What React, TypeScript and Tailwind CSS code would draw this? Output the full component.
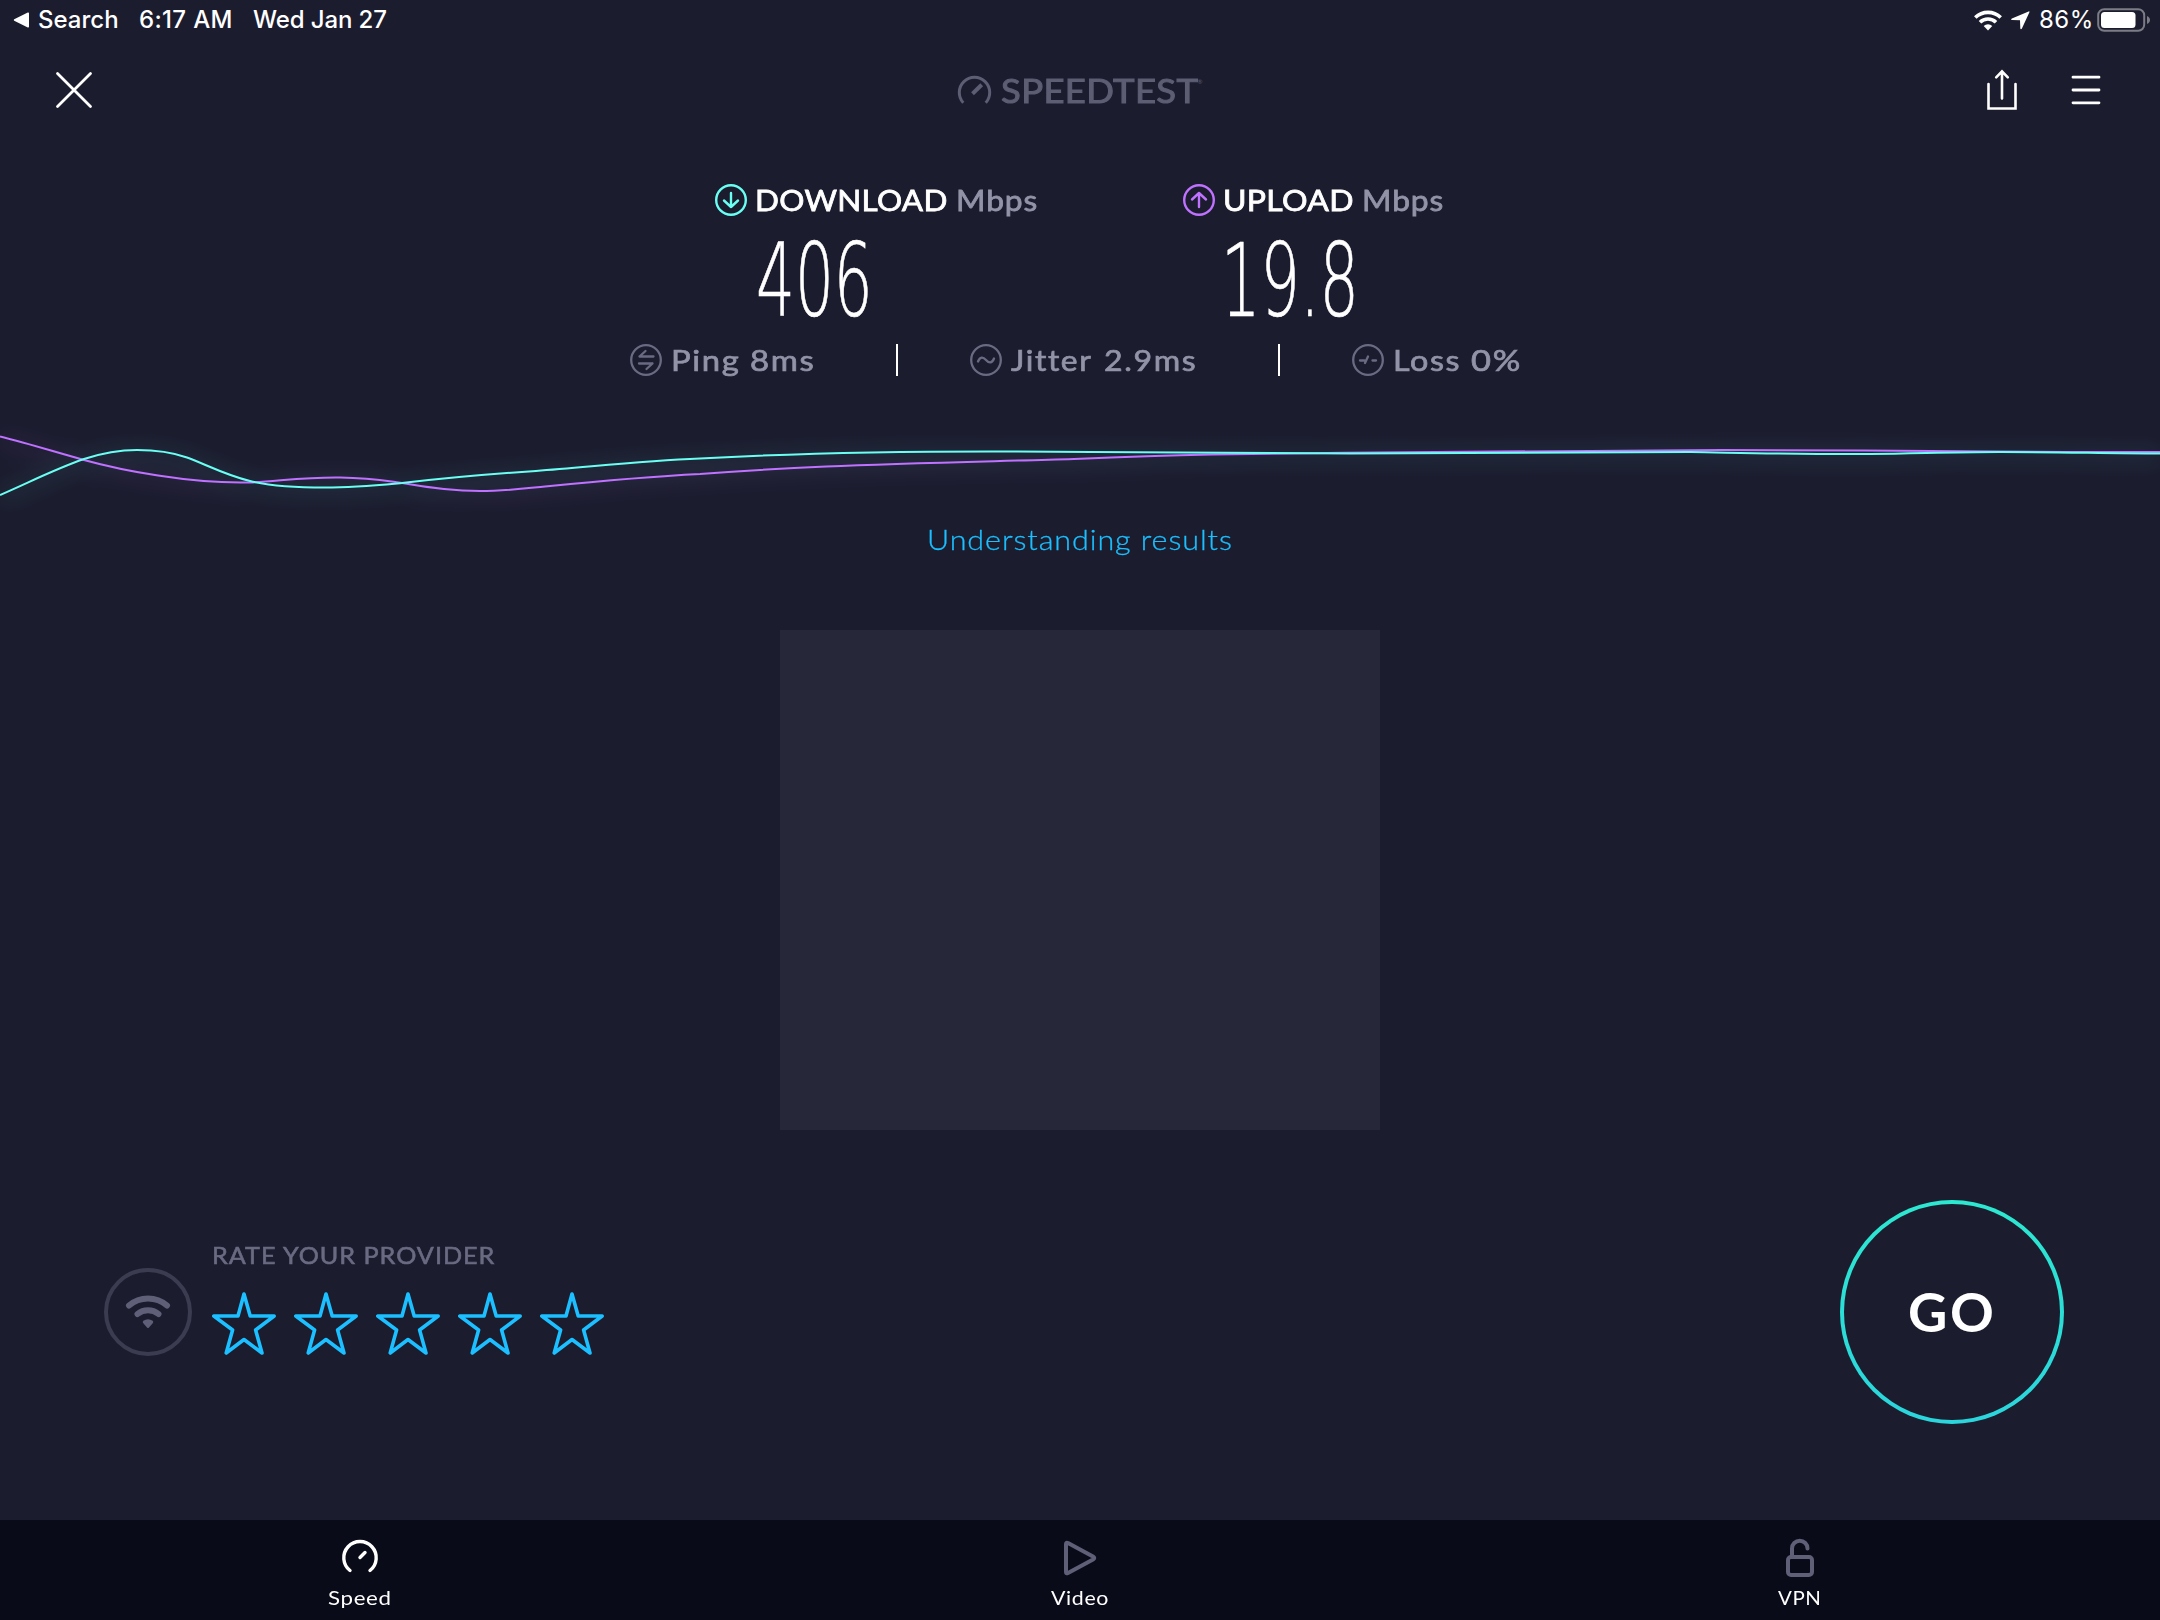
import { useLayoutEffect, useRef, useState } from 'react';
import type { ReactNode } from 'react';
import { clsx } from 'clsx';

interface TextProps {
  children: string;
  width: number;
  className?: string;
}

// Tracks a line of text so that it fills exactly the given width
function FitText({ children, width, className }: TextProps) {
  const ref = useRef<HTMLSpanElement>(null);
  const [spacing, setSpacing] = useState(0);

  useLayoutEffect(() => {
    if (!ref.current) return;
    const natural = ref.current.offsetWidth - spacing * children.length;
    setSpacing((width - natural) / Math.max(children.length - 1, 1));
  }, [children, width]);

  return (
    <span className={clsx('flex shrink-0 whitespace-pre', className)} style={{ width }}>
      <span ref={ref} style={{ letterSpacing: spacing }}>
        {children}
      </span>
    </span>
  );
}

// Widens or condenses the letters themselves to fill the given width
function StretchText({ children, width, className }: TextProps) {
  const ref = useRef<HTMLSpanElement>(null);
  const [scale, setScale] = useState(1);

  useLayoutEffect(() => {
    if (ref.current) setScale(width / ref.current.offsetWidth);
  }, [children, width]);

  return (
    <span className={clsx('flex shrink-0 whitespace-pre', className)} style={{ width }}>
      <span ref={ref} className="origin-left" style={{ transform: `scaleX(${scale})` }}>
        {children}
      </span>
    </span>
  );
}

function StatusBar() {
  return (
    <div className="flex h-10 shrink-0 items-center pr-[9px] pl-[13px] font-['Inter','Liberation_Sans',sans-serif] text-[24px] leading-none font-medium">
      <svg width="17" height="16" viewBox="0 0 17 16" className="mr-2">
        <path d="M1.2 7.2 14.8.6q1.2-.4 1.2.8v13.2q0 1.200-1.200.8L1.200 8.800q-1-.8 0-1.600Z" fill="#fff" />
      </svg>
      <FitText width={81} className="mr-5">Search</FitText>
      <FitText width={93} className="mr-[21px]">6:17 AM</FitText>
      <FitText width={134}>Wed Jan 27</FitText>

      <div className="ml-auto flex items-center">
        <svg width="28" height="21" viewBox="0 0 28 21" fill="none" stroke="#fff" strokeWidth="3.600">
          <path d="M1.300 7.500a18.200 18.200 0 0 1 25.400 0" />
          <path d="M6 12.300a11.500 11.500 0 0 1 16 0" />
          <path d="M14 20.500 9.700 16a6.200 6.200 0 0 1 8.600 0Z" fill="#fff" stroke="none" />
        </svg>
        <svg width="19" height="19" viewBox="0 0 19 19" className="ml-[9px]">
          <path d="M17.600.4.9 7.600C-.2 8.200 0 9 1.200 9.100L9 9.300l.3 8c.1 1.200 1 1.400 1.600.2L18.400 1.300q.4-1.300-.8-.9Z" fill="#fff" />
        </svg>
        <FitText width={54} className="ml-[9px] font-normal">86%</FitText>
        <svg width="54" height="24" viewBox="0 0 54 24" className="ml-1">
          <rect x="1.200" y="1.200" width="46" height="21.600" rx="6" fill="none" stroke="#7c7c87" strokeWidth="2" />
          <rect x="4" y="4" width="34.500" height="16" rx="3.500" fill="#fff" />
          <path d="M50 8c4 1.500 4 6.500 0 8Z" fill="#7c7c87" />
        </svg>
      </div>
    </div>
  );
}

function Header() {
  return (
    <header className="flex h-[100px] shrink-0 items-center justify-between pr-[59px] pl-[55px]">
      <svg width="118" height="38" viewBox="0 0 118 38" fill="none" stroke="#fff" strokeWidth="2.800" strokeLinecap="round">
        <path d="m2.500 2.500 33 33M35.500 2.500l-33 33" />
      </svg>
      <div className="flex items-center text-[#5d5d73]">
        <svg width="35" height="30" viewBox="0 0 35 30" fill="none" stroke="currentColor" strokeWidth="3" className="mr-[9px]">
          <path d="M6.300 27.800a15.200 15.200 0 1 1 22.400 0" />
          <path d="m15.500 18.800 9.200-9" strokeWidth="4" />
        </svg>
        <StretchText width={197} className="mt-px text-[32px] leading-[34px] tracking-[0.01em] [-webkit-text-stroke:1px_currentColor]">
          SPEEDTEST
        </StretchText>
        <span className="mb-4 text-[6px] leading-none">®</span>
      </div>
      <div className="flex items-center gap-[53px]">
        <svg width="32" height="42" viewBox="0 0 32 42" fill="none" stroke="#fff" strokeWidth="2.600" strokeLinecap="round">
          <path d="M2.500 15v24.500h27V15M16 29.500V3M10.200 8.300 16 2.300l5.800 6" />
        </svg>
        <svg width="30" height="32" viewBox="0 0 30 32" stroke="#fff" strokeWidth="2.800" strokeLinecap="round">
          <path d="M2 3.200h26M2 16h26M2 28.800h26" />
        </svg>
      </div>
    </header>
  );
}

interface ResultProps {
  label: string;
  labelWidth: number;
  value: string;
  valueWidth: number;
  valueClass: string;
  color: string;
  arrow: string;
}

function Result({ label, labelWidth, value, valueWidth, valueClass, color, arrow }: ResultProps) {
  return (
    <div className="flex flex-col">
      <div className="flex h-8 items-center text-[29px] leading-[32px] [-webkit-text-stroke:0.8px_currentColor]">
        <svg width="32" height="32" viewBox="0 0 32 32" fill="none" stroke={color} strokeWidth="2.400" strokeLinecap="round" strokeLinejoin="round">
          <circle cx="16" cy="16" r="14.800" />
          <path d={arrow} />
        </svg>
        <StretchText width={labelWidth} className="ml-2 tracking-[0.01em]">{label}</StretchText>
        <StretchText width={82} className="ml-2 tracking-[0.03em] text-[#9393a8]">Mbps</StretchText>
      </div>
      <StretchText
        width={valueWidth}
        className={clsx(
          "mt-3 h-[106px] items-center font-['DejaVu_Sans','Roboto',sans-serif] text-[102px] leading-[106px] font-extralight [-webkit-text-stroke:0.7px_white]",
          valueClass
        )}
      >
        {value}
      </StretchText>
    </div>
  );
}

interface StatProps {
  name: string;
  nameWidth: number;
  value: string;
  valueWidth: number;
  gap: string;
  children: ReactNode;
}

function Stat({ name, nameWidth, value, valueWidth, gap, children }: StatProps) {
  return (
    <div className="flex items-center text-[29px] leading-[32px] tracking-[0.05em] text-[#9393a8] [-webkit-text-stroke:0.7px_currentColor]">
      <svg width="32" height="32" viewBox="0 0 32 32" fill="none" stroke="#6a6a82" strokeWidth="2.300" strokeLinecap="round" strokeLinejoin="round" className="mr-[9px]">
        <circle cx="16" cy="16" r="14.800" />
        {children}
      </svg>
      <StretchText width={nameWidth} className={gap}>{name}</StretchText>
      <StretchText width={valueWidth}>{value}</StretchText>
    </div>
  );
}

const DOWNLOAD_CURVE =
  'M0 75C30 62 55 49 84 39C104 32.500 118 30 137 30C155 30 170 31.500 187 37.500C205 44 225 55 250 61C275 67 300 67.500 325 67.500C355 67.500 380 65 402 63C445 58 490 54 536 51C590 47 640 41 700 38.500C800 33 900 31.500 992 31.500C1110 31.500 1220 33.500 1350 33.500C1470 34 1590 32 1690 32C1750 33 1810 34.500 1870 34C1920 33.500 1950 32 2000 32C2060 32 2110 33.500 2160 33.500';
const UPLOAD_CURVE =
  'M0 16.500C30 24 55 32 84 40C120 50 190 64 250 62.500C280 61 305 57 340 57.500C370 58 380 60 402 63C430 68 455 71 480 71C505 71 520 69 545 66.500C590 62 640 57 700 54C740 51 780 48.500 826 46.500C910 43 990 41.500 1074 39C1120 37 1160 35.500 1212 34.500C1380 32 1540 30 1722 30C1820 30 1900 31 1997 31.500C2050 32 2110 32 2160 32';

function SpeedGraph() {
  return (
    <svg width="2160" height="110" viewBox="0 0 2160 110" fill="none" className="shrink-0">
      <defs>
        <filter id="glow" x="-50" y="-50" width="2260" height="210" filterUnits="userSpaceOnUse">
          <feGaussianBlur stdDeviation="10" />
        </filter>
      </defs>
      <g filter="url(#glow)" strokeWidth="18" opacity="0.06">
        <path d={UPLOAD_CURVE} stroke="#bf71ff" transform="translate(0 3)" />
        <path d={DOWNLOAD_CURVE} stroke="#6afff3" transform="translate(0 3)" />
      </g>
      <path d={UPLOAD_CURVE} stroke="#bf71ff" strokeWidth="2" />
      <path d={DOWNLOAD_CURVE} stroke="#6afff3" strokeWidth="2" />
    </svg>
  );
}

function ProviderRating() {
  return (
    <div className="mb-7 flex h-[116px] items-end">
      <svg width="88" height="88" viewBox="0 0 88 88" fill="none" className="mr-5">
        <circle cx="44" cy="44" r="42" stroke="#3c3c51" strokeWidth="4" />
        <g stroke="#5f5f77" strokeWidth="6" strokeLinecap="round">
          <path d="M25 37.500a29 29 0 0 1 38 0" />
          <path d="M33.500 46a16.500 16.500 0 0 1 21 0" />
        </g>
        <path d="M39.300 52.800q4.700-3.200 9.400 0 1.200 1.300 0 2.500L45 59.600q-1 1-2 0l-3.700-4.300q-1.200-1.200 0-2.500Z" fill="#5f5f77" />
      </svg>
      <div className="flex flex-col">
        <StretchText width={283} className="mb-[25px] text-[24px] leading-[24px] tracking-[0.04em] text-[#6a6a82] [-webkit-text-stroke:0.6px_currentColor]">
          RATE YOUR PROVIDER
        </StretchText>
        <div className="flex gap-[18px]">
          {[1, 2, 3, 4, 5].map((star) => (
            <svg key={star} width="64" height="64" viewBox="0 0 64 64" fill="none" stroke="#1cbfff" strokeWidth="3.600" strokeLinejoin="round">
              <path d="m32 2 6.200 22h24L43.600 38 50 61 32 47.500 14.200 61l6.400-23L1.800 24H26Z" />
            </svg>
          ))}
        </div>
      </div>
    </div>
  );
}

function GoButton() {
  return (
    <button className="grid size-[224px] place-items-center rounded-full bg-linear-to-b from-[#2de8d0] to-[#2bd5dc] p-1">
      <span className="grid size-full place-items-center rounded-full bg-[#1b1c2e]">
        <StretchText width={89} className="text-[53px] leading-[56px] font-bold tracking-[0.05em]">GO</StretchText>
      </span>
    </button>
  );
}

interface TabProps {
  label: string;
  width: number;
  children: ReactNode;
}

function Tab({ label, width, children }: TabProps) {
  return (
    <div className="flex flex-1 flex-col items-center pt-4">
      <svg width="44" height="44" viewBox="0 0 44 44" fill="none" stroke="#5f5f77" strokeWidth="4" strokeLinecap="round" strokeLinejoin="round">
        {children}
      </svg>
      <StretchText width={width} className="mt-2 text-[19.5px] leading-[20px] tracking-[0.03em]">{label}</StretchText>
    </div>
  );
}

export default function App() {
  return (
    <div className="flex h-[1620px] w-[2160px] flex-col overflow-hidden bg-[#1b1c2e] font-['Lato','Liberation_Sans',sans-serif] text-white">
      <StatusBar />
      <Header />

      <section className="flex h-[200px] shrink-0 pt-11 pl-[715px]">
        <div className="w-[468px]">
          <Result label="DOWNLOAD" labelWidth={193} value="406" valueWidth={117} valueClass="ml-[41px]" color="#6afff3" arrow="M16 9v14M9 16.500l7 6.500 7-6.500" />
        </div>
        <Result label="UPLOAD" labelWidth={131} value="19.8" valueWidth={138} valueClass="ml-[38px]" color="#bf71ff" arrow="M16 23V9M9 15.500 16 9l7 6.500" />
      </section>

      <section className="flex h-10 shrink-0 items-center pl-[630px]">
        <Stat name="Ping" nameWidth={69} value="8ms" valueWidth={66} gap="mr-[10px]">
          <path d="m9.500 12.500 6-5.500M9.500 12.500h14M22.500 19.500l-6 5.500M22.500 19.500H9" />
        </Stat>
        <div className="mr-[72px] ml-20 h-8 w-0.5 bg-white" />
        <Stat name="Jitter" nameWidth={81} value="2.9ms" valueWidth={93} gap="mr-[12px]">
          <path d="M8 17.500c2-5 5-5 8-1.500s6 3.500 8-1.500" />
        </Stat>
        <div className="mr-[72px] ml-[81px] h-8 w-0.5 bg-white" />
        <Stat name="Loss" nameWidth={68} value="0%" valueWidth={51} gap="mr-[10px]">
          <path d="M8 16.500h4.500M13 19l3-6.500M20.500 16.500H24" />
        </Stat>
      </section>

      <div className="h-10 shrink-0" />
      <SpeedGraph />

      <a className="mt-[-7px] flex h-[32px] shrink-0 justify-center text-[28px] leading-[32px] font-light tracking-[0.03em] text-[#1cbfff] [-webkit-text-stroke:0.3px_currentColor]">
        <StretchText width={306}>Understanding results</StretchText>
      </a>

      <div className="mt-[75px] h-[500px] w-[600px] shrink-0 self-center bg-[#262739]" />

      <section className="flex flex-1 items-center justify-between pr-24 pb-[26px] pl-[104px]">
        <ProviderRating />
        <GoButton />
      </section>

      <nav className="flex h-[100px] shrink-0 bg-[#090b18]">
        <Tab label="Speed" width={64}>
          <path d="M12 34.500a16.200 16.200 0 1 1 20 0" stroke="#fff" strokeWidth="3.400" />
          <path d="m22 21.500 5-5" stroke="#fff" strokeWidth="3.400" />
        </Tab>
        <Tab label="Video" width={58}>
          <path d="M8 8v28q0 2 2 1L35 23.500q2.500-1.500 0-3L10 7Q8 6 8 8Z" />
        </Tab>
        <Tab label="VPN" width={44}>
          <rect x="10" y="21" width="24" height="18" rx="3" />
          <path d="M14 21v-8.500a7.700 7.700 0 0 1 15.500 0" />
        </Tab>
      </nav>
    </div>
  );
}
